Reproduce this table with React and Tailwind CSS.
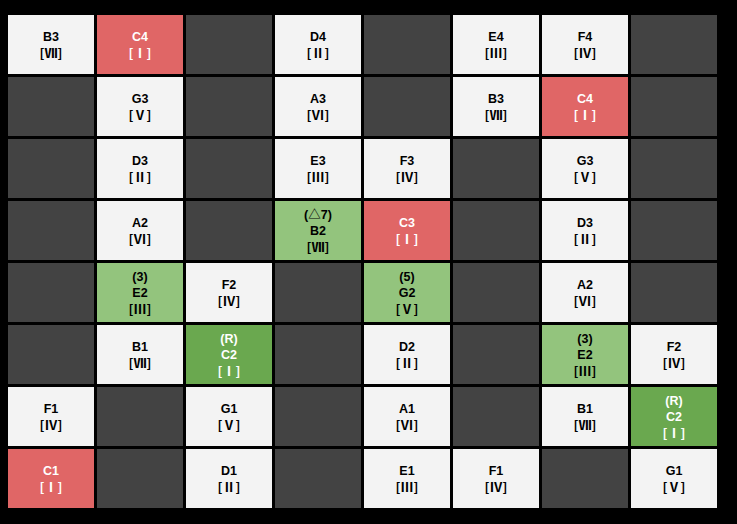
import React from 'react';

// W = white, D = dark, R = red, G = light green, K = dark green
const ROWS = [
  [['W', 'B3', 'Ⅶ'], ['R', 'C4', 'Ⅰ'], ['D'], ['W', 'D4', 'Ⅱ'], ['D'], ['W', 'E4', 'Ⅲ'], ['W', 'F4', 'Ⅳ'], ['D']],
  [['D'], ['W', 'G3', 'Ⅴ'], ['D'], ['W', 'A3', 'Ⅵ'], ['D'], ['W', 'B3', 'Ⅶ'], ['R', 'C4', 'Ⅰ'], ['D']],
  [['D'], ['W', 'D3', 'Ⅱ'], ['D'], ['W', 'E3', 'Ⅲ'], ['W', 'F3', 'Ⅳ'], ['D'], ['W', 'G3', 'Ⅴ'], ['D']],
  [['D'], ['W', 'A2', 'Ⅵ'], ['D'], ['G', 'B2', 'Ⅶ', '(△7)'], ['R', 'C3', 'Ⅰ'], ['D'], ['W', 'D3', 'Ⅱ'], ['D']],
  [['D'], ['G', 'E2', 'Ⅲ', '(3)'], ['W', 'F2', 'Ⅳ'], ['D'], ['G', 'G2', 'Ⅴ', '(5)'], ['D'], ['W', 'A2', 'Ⅵ'], ['D']],
  [['D'], ['W', 'B1', 'Ⅶ'], ['K', 'C2', 'Ⅰ', '(R)'], ['D'], ['W', 'D2', 'Ⅱ'], ['D'], ['G', 'E2', 'Ⅲ', '(3)'], ['W', 'F2', 'Ⅳ']],
  [['W', 'F1', 'Ⅳ'], ['D'], ['W', 'G1', 'Ⅴ'], ['D'], ['W', 'A1', 'Ⅵ'], ['D'], ['W', 'B1', 'Ⅶ'], ['K', 'C2', 'Ⅰ', '(R)']],
  [['R', 'C1', 'Ⅰ'], ['D'], ['W', 'D1', 'Ⅱ'], ['D'], ['W', 'E1', 'Ⅲ'], ['W', 'F1', 'Ⅳ'], ['D'], ['W', 'G1', 'Ⅴ']],
];

const TONE = {
  W: 'bg-[#f3f3f3] text-black',
  D: 'bg-[#434343]',
  R: 'bg-[#e06666] text-white',
  G: 'bg-[#93c47d] text-black',
  K: 'bg-[#6aa84f] text-white',
};

function Cell({ cell }) {
  const [tone, note, degree, extra] = cell;
  return (
    <div className={`h-[59px] flex flex-col items-center justify-center text-[12.5px] font-bold leading-[16px] ${TONE[tone]}`}>
      {extra && <span>{extra}</span>}
      {note && <span>{note}</span>}
      {degree && (
        <span className="font-['Noto_Sans_CJK_JP',sans-serif] text-[13px] leading-[16px]">[{degree}]</span>
      )}
    </div>
  );
}

export default function App() {
  return (
    <div
      className="w-[737px] h-[524px] bg-black pt-[15px] pl-[8px]"
      style={{ fontFamily: '"Liberation Sans", "Noto Sans CJK JP", sans-serif' }}
    >
      <div className="grid grid-cols-[repeat(8,86px)] gap-x-[3px] gap-y-[3px]">
        {ROWS.flatMap((row, r) => row.map((cell, c) => <Cell key={`${r}-${c}`} cell={cell} />))}
      </div>
    </div>
  );
}
